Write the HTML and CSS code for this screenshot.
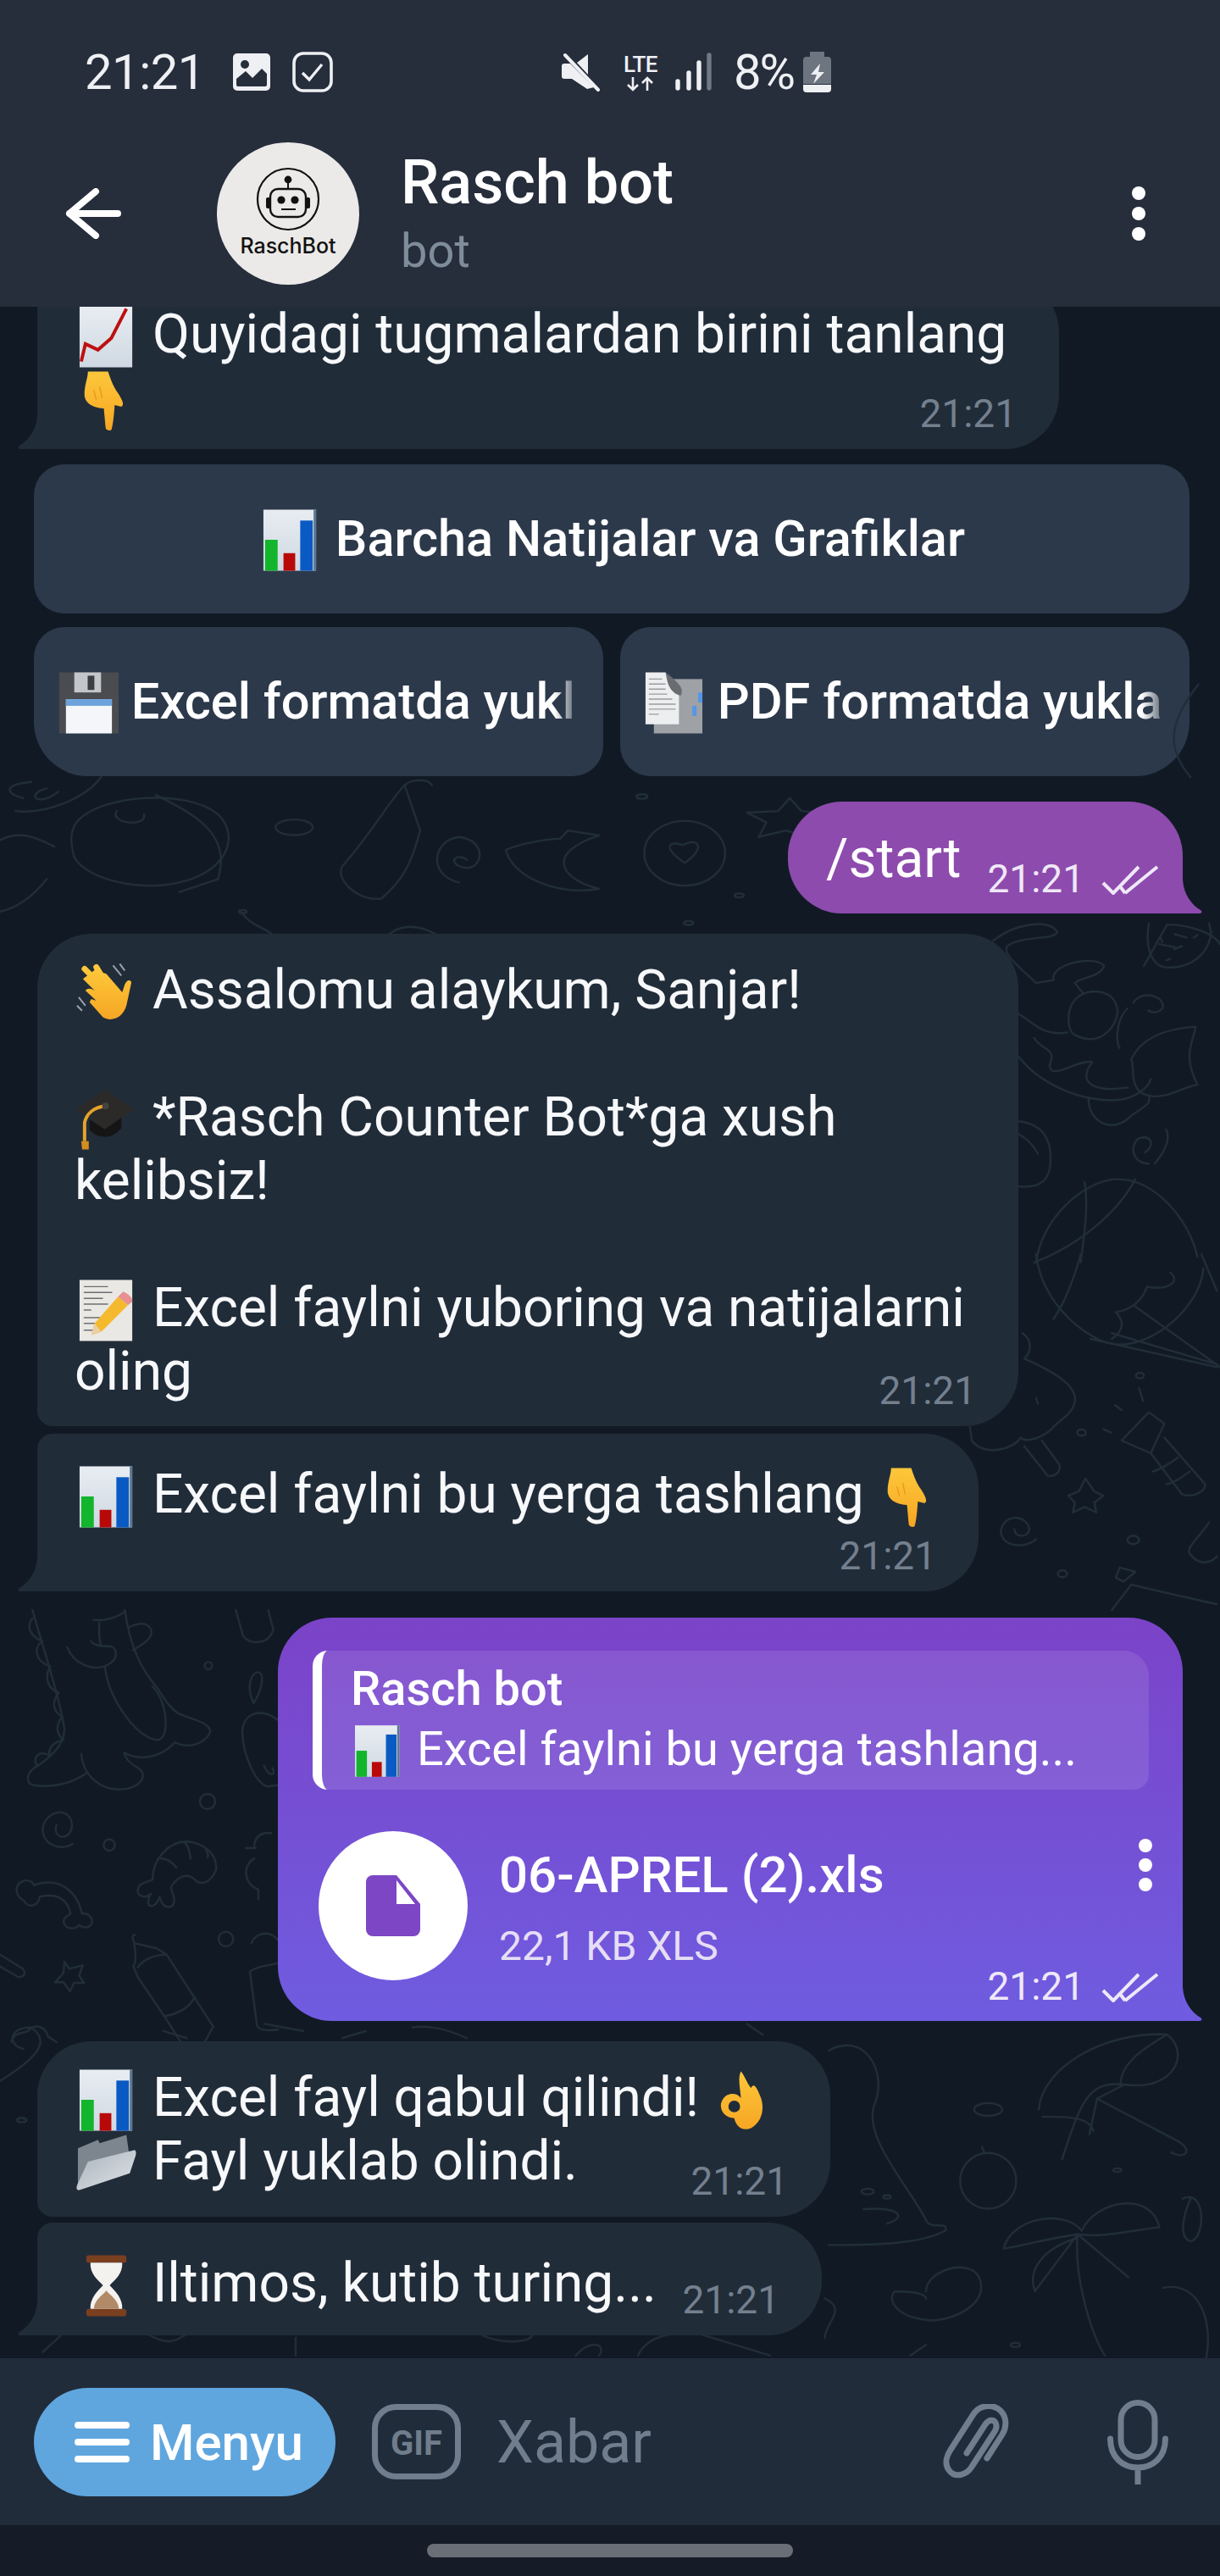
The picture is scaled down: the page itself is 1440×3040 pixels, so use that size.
FILE: index.html
```html
<!DOCTYPE html>
<html lang="uz">
<head>
<meta charset="utf-8">
<title>Rasch bot</title>
<link rel="stylesheet" href="styles.css">
</head>
<body>
<svg class="sprites" xmlns="http://www.w3.org/2000/svg">
  <defs>
    <linearGradient id="paper" x1="0" y1="0" x2="0" y2="1"><stop offset="0" stop-color="#e8edf2"/><stop offset="1" stop-color="#cfd8e2"/></linearGradient>
    <linearGradient id="gold" x1="0" y1="0" x2="0" y2="1"><stop offset="0" stop-color="#fdc73a"/><stop offset="1" stop-color="#f6a623"/></linearGradient>
    <linearGradient id="fold" x1="0" y1="0" x2="1" y2="1"><stop offset="0" stop-color="#a9b2bb"/><stop offset="1" stop-color="#dfe4e8"/></linearGradient>
  </defs>
  <symbol id="e-chart" viewBox="0 0 77 73">
    <rect x="6" width="63" height="73" fill="url(#paper)"/>
    <rect x="8" y="36" width="15" height="37" fill="#12b52c"/>
    <rect x="30" y="52" width="14" height="21" fill="#b90808"/>
    <rect x="50" y="13" width="15" height="60" fill="#0a5ac4"/>
    <rect x="66" width="3" height="73" fill="#5c7890"/>
  </symbol>
  <symbol id="e-up" viewBox="0 0 77 73">
    <rect x="6" width="63" height="73" fill="url(#paper)"/>
    <path d="M8 66 L13 45 L28 52 L44 38 L62 3" fill="none" stroke="#bd1010" stroke-width="4"/>
  </symbol>
  <symbol id="e-point" viewBox="0 0 77 73">
    <path d="M16 2 H40 C43 10 45 18 52 28 C57 36 60 42 56 44 L48 42 C47 55 46 66 44 72 C40 73 37 72 37 68 L35 46 C25 46 14 42 12 32 C11 20 16 10 16 2 Z" fill="url(#gold)"/>
    <path d="M30 20 L33 34 M23 24 L26 36" stroke="#e89a1e" stroke-width="1.4"/>
  </symbol>
  <symbol id="e-wave" viewBox="0 0 77 73">
    <path d="M12 8 L34 30 M26 6 L38 26" stroke="#fdc73a" stroke-width="7" stroke-linecap="round"/>
    <path d="M10 20 L24 34 C18 30 14 32 13 34 L26 46 L20 44 L18 48 L34 66 C45 72 58 66 62 52 L68 24 C66 20 62 22 60 27 L57 36 L38 14 L32 12 L40 26 L26 8 Z" fill="url(#gold)"/>
    <path d="M46 4 L56 16 M54 2 L60 10 M5 42 L13 52 M3 52 L9 58" stroke="#9aa2aa" stroke-width="2"/>
  </symbol>
  <symbol id="e-cap" viewBox="0 0 77 73">
    <path d="M36 0 L72 24 L36 48 L2 24 Z" fill="#2b2a29"/>
    <path d="M18 36 L18 48 C26 60 46 60 56 46 L56 34 L36 48 Z" fill="#151515"/>
    <path d="M36 20 C22 22 14 30 12 40 L12 62" stroke="#e5a32b" stroke-width="4" fill="none"/>
    <path d="M8 62 H17 L17 72 H9 Z" fill="#d48e20"/>
    <circle cx="37" cy="20" r="4" fill="#45433f"/>
  </symbol>
  <symbol id="e-memo" viewBox="0 0 77 73">
    <rect x="6" width="63" height="73" fill="#e9e8e4"/>
    <path d="M11 8 H40 M11 15 H45 M11 22 H34 M11 29 H40 M11 36 H20 M11 45 H32 M11 52 H26 M11 60 H22" stroke="#6d6f72" stroke-width="1.5"/>
    <path d="M52 20 L64 30 L32 62 L20 66 L24 52 Z" fill="#f5b92d"/>
    <path d="M24 52 L20 66 L32 62 Z" fill="#e9cfa4"/>
    <path d="M52 20 L58 14 C64 16 70 22 69 26 L64 30 Z" fill="#e78f91"/>
  </symbol>
  <symbol id="e-floppy" viewBox="0 0 77 73">
    <rect x="6" width="71" height="73" fill="#4a4c50"/>
    <rect x="24" y="0" width="32" height="24" fill="#c3c6ca"/>
    <rect x="40" y="4" width="8" height="17" fill="#3c3e42"/>
    <rect x="14" y="32" width="55" height="41" fill="#f4f6f9"/>
    <rect x="14" y="32" width="55" height="8" fill="#6ea2dc"/>
  </symbol>
  <symbol id="e-doc" viewBox="0 0 77 73">
    <rect x="16" y="8" width="58" height="65" fill="#9ea1a5"/>
    <rect x="69" y="24" width="5" height="12" fill="#5596e8"/>
    <rect x="62" y="40" width="5" height="12" fill="#5596e8"/>
    <path d="M6 0 H30 C34 8 42 14 46 16 V62 H6 Z" fill="#eceeef"/>
    <path d="M30 0 C32 12 34 24 48 28 C52 20 48 14 30 0 Z" fill="#6a6c70"/>
    <path d="M10 8 H26 M10 14 H30 M10 20 H30 M10 26 H32 M10 32 H38 M10 38 H42 M10 44 H42 M10 50 H22" stroke="#9a9ca0" stroke-width="1.4"/>
  </symbol>
  <symbol id="e-ok" viewBox="0 0 77 73">
    <path d="M34 2 C38 6 40 14 46 22 C50 14 54 24 58 34 C62 46 60 62 46 70 C36 74 28 68 26 58 C14 58 6 46 12 36 C18 26 30 28 34 34 C33 22 30 10 34 2 Z" fill="url(#gold)"/>
    <circle cx="26" cy="44" r="7" fill="#212c39"/>
  </symbol>
  <symbol id="e-folder" viewBox="0 0 77 73">
    <path d="M4 18 L28 8 L30 12 L62 2 L66 30 L12 64 L4 66 Z" fill="#7d868f"/>
    <path d="M16 34 L72 20 C74 22 74 24 72 30 L66 48 L6 68 C2 68 2 66 3 62 Z" fill="url(#fold)"/>
  </symbol>
  <symbol id="e-hour" viewBox="0 0 77 73">
    <rect x="14" y="0" width="48" height="9" rx="3" fill="#7a3f1f"/>
    <rect x="14" y="64" width="48" height="9" rx="3" fill="#7a3f1f"/>
    <path d="M19 9 H57 C58 22 48 30 42 36 C48 42 58 52 57 64 H19 C18 52 28 42 34 36 C28 30 18 22 19 9 Z" fill="#f4f2ef"/>
    <path d="M23 64 C24 52 34 48 38 42 C42 48 52 52 53 64 Z" fill="#b18a68"/>
  </symbol>
  <symbol id="i-check" viewBox="0 0 68 35">
    <path d="M2 21 L14 33 L44 2 M28 33 L66 2 M22 25 L28 33" fill="none" stroke="currentColor" stroke-width="4"/>
  </symbol>
</svg>

<div class="phone">
  <header class="appbar">
    <div class="status">
      <div class="status-left">
        <span class="status-time">21:21</span>
        <svg class="st-img" viewBox="0 0 44 44"><path d="M5 0 H39 A5 5 0 0 1 44 5 V39 A5 5 0 0 1 39 44 H5 A5 5 0 0 1 0 39 V5 A5 5 0 0 1 5 0 Z" fill="#eef0f3"/><circle cx="14" cy="13" r="5" fill="#262d3b"/><path d="M4 37 V30 L15 21 L23 29 L34 18 L40 24 V37 A2 2 0 0 1 38 39 H6 A2 2 0 0 1 4 37 Z" fill="#262d3b"/></svg>
        <svg class="st-check" viewBox="0 0 48 48"><rect x="2" y="2" width="44" height="44" rx="11" fill="none" stroke="#eef0f3" stroke-width="3.6"/><path d="M12 25 L20 33 L35 15" fill="none" stroke="#eef0f3" stroke-width="3.4"/></svg>
      </div>
      <div class="status-right">
        <svg class="st-mute" viewBox="0 0 46 46"><path d="M0 16 C0 14 1 13 3 13 H10 L38 41 L30 43 L12 31 H3 C1 31 0 30 0 28 Z M18 12 L31 2 V26 Z" fill="#eef0f3"/><path d="M4 3 L43 44" stroke="#eef0f3" stroke-width="4" stroke-linecap="round"/></svg>
        <div class="st-lte"><span class="lte-text">LTE</span><svg class="lte-arrows" viewBox="0 0 34 18"><path d="M8 1 V16 M2 10 L8 16 L14 10 M25 17 V2 M19 8 L25 2 L31 8" fill="none" stroke="#eef0f3" stroke-width="2.6"/></svg></div>
        <svg class="st-signal" viewBox="0 0 43 46"><g stroke-width="5.4" stroke-linecap="round"><path d="M3 34 V42 M16 24 V42 M28 12 V42" stroke="#eef0f3"/><path d="M40 3 V42" stroke="#717983"/></g></svg>
        <span class="status-pct">8%</span>
        <svg class="st-batt" viewBox="0 0 33 48"><path d="M8 0 H25 V6 H29 A4 4 0 0 1 33 10 V38 H0 V10 A4 4 0 0 1 4 6 H8 Z" fill="#6d7580"/><path d="M0 39 H33 V44 A4 4 0 0 1 29 48 H4 A4 4 0 0 1 0 44 Z" fill="#eef0f3"/><path d="M20 14 L9 27 H16 L12 38 L25 24 H18 Z" fill="#eef0f3"/></svg>
      </div>
    </div>
    <div class="toolbar">
      <svg class="back" viewBox="0 0 66 60"><path d="M36 4 L5 30 L36 56 M5 30 H62" fill="none" stroke="#fff" stroke-width="8" stroke-linecap="round" stroke-linejoin="round"/></svg>
      <svg class="avatar" viewBox="0 0 168 168">
        <circle cx="84" cy="84" r="84" fill="#ebeae8"/>
        <circle cx="84" cy="67" r="36" fill="none" stroke="#111" stroke-width="2.2"/>
        <circle cx="84" cy="44" r="4.4" fill="#111"/><path d="M84 46 V55" stroke="#111" stroke-width="2"/>
        <rect x="63" y="55" width="42" height="33" rx="9" fill="none" stroke="#111" stroke-width="2.4"/>
        <rect x="58" y="65" width="5" height="13" rx="2" fill="#111"/><rect x="105" y="65" width="5" height="13" rx="2" fill="#111"/>
        <circle cx="76" cy="68" r="4.6" fill="#111"/><circle cx="92" cy="68" r="4.6" fill="#111"/>
        <path d="M76 79 H93" stroke="#111" stroke-width="2"/>
        <text class="avatar-text" x="84" y="131" text-anchor="middle">RaschBot</text>
      </svg>
      <div class="chat-title">
        <div class="chat-name">Rasch bot</div>
        <div class="chat-sub">bot</div>
      </div>
      <svg class="more" viewBox="0 0 18 66"><circle cx="9" cy="9" r="8" fill="#fff"/><circle cx="9" cy="33" r="8" fill="#fff"/><circle cx="9" cy="57" r="8" fill="#fff"/></svg>
    </div>
  </header>

  <main class="chat">
    <svg class="doodles" viewBox="0 362 1440 2421" preserveAspectRatio="none" aria-hidden="true">
      <g fill="none" stroke="#212e3a" stroke-width="2.4" stroke-linecap="round" stroke-linejoin="round">
        <g transform="translate(0,1900) scale(.3333)">
          <path vector-effect="non-scaling-stroke" d="M115 0 C130 60 210 300 228 420 C230 480 170 530 120 560 C90 585 90 620 130 622 C200 628 260 610 310 575"/>
          <path vector-effect="non-scaling-stroke" d="M115 30 C90 60 110 95 150 110 C120 130 120 180 178 200 C155 240 170 280 208 292 C180 330 190 360 220 378 C195 410 200 440 225 460 C190 465 170 490 175 515 C140 495 115 520 130 550"/>
          <path vector-effect="non-scaling-stroke" d="M288 510 C295 590 360 640 430 635 C490 632 530 590 490 560 C465 545 445 530 440 505 C490 535 570 525 620 468 C670 495 730 470 745 430 C740 395 680 390 630 365 C600 345 585 320 560 280 C500 210 460 130 442 0"/>
          <path vector-effect="non-scaling-stroke" d="M372 200 C380 300 470 440 550 460 C585 465 590 420 585 370 C580 330 560 290 540 270"/>
          <path vector-effect="non-scaling-stroke" d="M238 132 C260 190 330 220 380 195 C420 175 420 130 385 128 C360 130 330 125 322 110 M352 45 C350 80 352 110 358 128 M330 35 C370 40 420 25 442 5 M455 62 C480 50 520 35 535 70 C545 100 500 125 470 142"/>
          <path vector-effect="non-scaling-stroke" d="M258 828 C220 850 165 840 152 790 C145 740 190 710 225 718 C260 730 265 780 235 800 C210 810 190 790 200 760"/>
          <circle vector-effect="non-scaling-stroke" cx="387" cy="832" r="20"/><circle vector-effect="non-scaling-stroke" cx="735" cy="678" r="27"/><circle vector-effect="non-scaling-stroke" cx="738" cy="197" r="13"/><circle vector-effect="non-scaling-stroke" cx="800" cy="1165" r="26"/>
          <path vector-effect="non-scaling-stroke" d="M120 975 C200 945 270 985 290 1075 C310 1070 330 1090 325 1110 C310 1135 285 1120 280 1115 C270 1130 235 1135 225 1105 C225 1085 245 1080 250 1075 C240 1030 210 1000 140 1015 C140 1045 100 1060 85 1030 C50 1010 50 970 85 958 C105 955 120 965 120 975"/>
          <path vector-effect="non-scaling-stroke" d="M540 955 C540 880 600 820 660 820 C730 825 770 870 765 920 C750 960 715 980 690 955 C660 925 620 950 605 985 C620 1020 625 1050 595 1052 C575 1050 570 1030 565 1015 C555 1050 530 1055 525 1040 C525 1020 530 1010 535 1005 C510 1025 480 1010 490 985 C495 965 520 965 540 955 M655 825 C670 840 672 860 675 880 M560 880 C590 875 610 895 625 912 M730 850 C735 860 740 870 735 875"/>
          <path vector-effect="non-scaling-stroke" d="M478 1150 C465 1150 470 1165 475 1180 C480 1210 482 1230 478 1250 L472 1260 L488 1300 L583 1440 L640 1530 M488 1265 C510 1235 550 1220 590 1220 L755 1475 L725 1530 M478 1180 L555 1198 L590 1220 M583 1438 C630 1430 670 1410 690 1370"/>
          <path vector-effect="non-scaling-stroke" d="M228 1245 L245 1270 L293 1258 L280 1295 L298 1320 L262 1320 L248 1350 L225 1318 L195 1318 L225 1285 Z"/>
          <path vector-effect="non-scaling-stroke" d="M0 1220 L80 1270 C95 1285 85 1300 65 1300 L0 1262 M40 1530 C50 1490 90 1500 100 1490 C120 1465 160 1470 170 1510 L200 1530 M835 0 L860 90 C880 125 950 125 968 70 L950 0"/>
          <path vector-effect="non-scaling-stroke" d="M898 330 C870 270 890 220 915 220 C940 225 925 290 898 330 M858 430 C860 370 920 340 985 390 M858 430 C860 520 910 620 950 625 L985 620 M935 550 C950 590 980 590 965 560 M900 840 C900 800 930 785 960 790 M870 843 H905 M900 880 C860 900 860 970 915 990 L915 1025 M890 1180 C900 1150 950 1125 985 1170 M885 1280 L910 1470 C915 1490 950 1490 985 1485 M885 1280 C910 1260 950 1260 985 1250"/>
        </g>
        <g transform="translate(720,1090) scale(.4592,.3333)">
          <path vector-effect="non-scaling-stroke" d="M985 60 C1040 0 1130 -20 1150 30 C1140 60 1060 40 1020 80 C1010 110 1050 150 1095 210 L1140 200 C1130 140 1250 110 1270 150 C1260 190 1210 190 1195 210 L1215 245 M1240 240 C1170 250 1170 360 1190 390 C1250 440 1300 380 1305 310 C1300 260 1280 240 1240 240 M1330 300 C1300 340 1300 420 1310 440 M1345 280 C1370 230 1430 260 1420 300 C1400 330 1370 300 1390 310 M1340 480 C1370 390 1450 370 1505 365 C1500 420 1470 460 1510 570 C1470 580 1430 620 1390 610 C1330 600 1350 510 1340 480 M1050 320 C1090 350 1110 400 1175 385 M1090 405 C1110 450 1150 440 1130 500 C1130 560 1200 480 1240 490 C1200 560 1240 600 1330 580 M1050 470 C1100 560 1200 630 1300 625 C1350 620 1385 580 1390 550 M1230 620 C1230 700 1290 750 1340 680 C1380 640 1390 640 1385 610 M1385 850 C1340 850 1335 780 1360 760 C1395 745 1400 790 1375 810 M1400 850 C1430 800 1440 760 1430 730 M1050 700 C1120 710 1140 780 1130 870 C1120 930 1080 935 1050 930 M1050 745 C1080 770 1090 790 1100 815"/>
          <path vector-effect="non-scaling-stroke" d="M1095 1200 C1110 1040 1220 910 1300 905 C1400 900 1490 1050 1510 1180 M1220 915 C1230 1000 1220 1090 1210 1200 M1350 905 C1310 1010 1220 1130 1090 1200"/>
          <path vector-effect="non-scaling-stroke" d="M1385 0 C1375 80 1390 150 1430 155 C1490 160 1540 110 1545 30 L1540 0 M1415 50 L1420 65 M1450 90 L1470 80 M1500 50 L1510 40 M1430 130 L1440 125"/>
        </g>
        <g transform="translate(720,1480) scale(.4592,.3333)">
          <path vector-effect="non-scaling-stroke" d="M1095 0 C1110 180 1230 310 1300 320 C1400 330 1520 180 1525 50 M1140 230 C1170 170 1190 100 1210 0 M1235 300 L1560 400 M1290 280 L1560 390 M1350 185 L1568 400 M1440 65 C1470 100 1430 130 1380 115 C1370 160 1340 200 1300 205 C1330 250 1310 280 1290 300 M1520 0 L1560 130"/>
          <path vector-effect="non-scaling-stroke" d="M1060 280 C1090 310 1080 350 1065 370 C1130 410 1200 460 1195 520 C1190 570 1150 590 1135 620 C1110 650 1070 670 1055 650 C1040 690 960 720 930 660 L925 610 M1065 680 L1125 785 C1145 790 1160 770 1155 745 L1110 660 M1095 510 L1100 530"/>
          <circle vector-effect="non-scaling-stroke" cx="1362" cy="430" r="10"/><circle vector-effect="non-scaling-stroke" cx="1212" cy="632" r="11"/><circle vector-effect="non-scaling-stroke" cx="1345" cy="1012" r="15"/><circle vector-effect="non-scaling-stroke" cx="1163" cy="1132" r="12"/>
          <path vector-effect="non-scaling-stroke" d="M1360 475 L1370 520 M1298 535 L1315 552 M1268 620 L1288 632 M1385 560 L1315 660 L1390 705 L1425 600 Z M1390 705 L1470 850 C1500 865 1530 840 1530 815 L1425 650 M1460 720 C1440 740 1420 760 1395 770 M1490 770 C1470 790 1450 810 1430 815"/>
          <path vector-effect="non-scaling-stroke" d="M1222 795 L1245 840 L1268 855 L1245 880 L1250 915 L1220 895 L1190 915 L1195 880 L1178 855 L1205 840 Z"/>
          <path vector-effect="non-scaling-stroke" d="M1095 1010 C1060 1050 1000 1030 1005 975 C1020 910 1075 930 1078 975 C1075 1005 1040 1005 1040 975"/>
          <path vector-effect="non-scaling-stroke" d="M1540 950 C1510 1010 1480 1040 1490 1060 C1510 1100 1540 1100 1560 1070 M1290 1260 L1340 1170 L1400 1190 L1560 1240 M1310 1110 L1350 1125 L1320 1160 L1300 1145 Z"/>
        </g>
        <g transform="translate(0,540) scale(.9184,.3827)">
          <path vector-effect="non-scaling-stroke" d="M100 1120 C130 1040 240 1020 280 1100 C310 1170 290 1280 230 1310 C180 1340 110 1300 95 1230 C90 1180 90 1150 100 1120 M150 1090 C140 1130 190 1140 185 1100 M200 1040 C240 1090 300 1150 280 1300 L230 1340"/>
          <circle vector-effect="non-scaling-stroke" cx="378" cy="1140" r="24"/>
          <path vector-effect="non-scaling-stroke" d="M520 1010 C500 1060 480 1150 440 1260 C430 1300 460 1370 490 1360 C520 1300 530 1240 540 1150 Z M520 1010 C530 990 550 990 555 1010"/>
          <path vector-effect="non-scaling-stroke" d="M590 1310 C550 1290 555 1180 590 1170 C630 1180 620 1290 590 1260 C575 1240 590 1220 600 1240"/>
          <path vector-effect="non-scaling-stroke" d="M650 1210 C660 1300 720 1350 770 1330 C720 1300 700 1220 770 1165 L730 1150 L720 1175 C690 1180 670 1190 650 1210"/>
          <ellipse vector-effect="non-scaling-stroke" cx="880" cy="1220" rx="52" ry="100"/>
          <path vector-effect="non-scaling-stroke" d="M880 1250 C850 1200 860 1180 878 1195 C895 1170 910 1200 880 1250"/>
          <circle vector-effect="non-scaling-stroke" cx="825" cy="1045" r="7"/>
          <path vector-effect="non-scaling-stroke" d="M1015 1050 L1030 1090 L1070 1100 L1040 1130 L1040 1170 L1010 1150 L975 1170 L985 1125 L960 1095 L1000 1090 Z"/>
          <path vector-effect="non-scaling-stroke" d="M60 1020 C30 1040 50 1080 75 1030 M0 1180 C30 1140 60 1190 70 1200 M60 1300 C40 1360 20 1390 0 1400 M310 1400 C320 1440 340 1450 350 1470 M560 1470 C530 1430 510 1450 500 1470"/>
          <circle vector-effect="non-scaling-stroke" cx="312" cy="1400" r="5"/><circle vector-effect="non-scaling-stroke" cx="950" cy="1350" r="6"/><circle vector-effect="non-scaling-stroke" cx="885" cy="1435" r="6"/>
          <path vector-effect="non-scaling-stroke" d="M1470 1568 L1500 1440 C1530 1440 1560 1468 1568 1500 M1490 1500 L1510 1510 M1510 1470 L1525 1480"/>
          <path vector-effect="non-scaling-stroke" d="M1540 700 C1500 820 1500 900 1530 985 M40 1000 C0 1010 10 1040 30 1050 M130 985 C110 1050 60 1100 20 1090"/>
        </g>
        <g transform="translate(0,2380) scale(.9184,.4209)">
          <path vector-effect="non-scaling-stroke" d="M1335 260 C1340 140 1420 40 1500 50 C1530 100 1510 210 1445 190 C1400 180 1390 230 1365 400 M1405 320 C1400 280 1370 280 1340 280 M1500 50 C1460 100 1440 140 1440 190 M1445 190 L1410 230 M1410 230 L1515 350 C1535 380 1520 400 1505 380 M1410 230 L1400 330"/>
          <path vector-effect="non-scaling-stroke" d="M1290 650 C1300 560 1370 540 1390 600 C1410 510 1480 490 1490 590 C1450 600 1420 620 1385 610 C1350 620 1320 640 1290 650 M1385 610 C1380 720 1400 880 1420 950 M1385 610 L1330 770 M1385 610 L1450 730 M1330 770 C1320 710 1340 650 1385 620"/>
          <ellipse vector-effect="non-scaling-stroke" cx="1270" cy="460" rx="36" ry="78"/><path vector-effect="non-scaling-stroke" d="M1265 380 L1262 365"/>
          <path vector-effect="non-scaling-stroke" d="M1065 95 C1110 40 1140 150 1125 240 C1105 330 1170 480 1190 570 C1195 600 1220 570 1215 600 C1180 640 1120 640 1065 640 M1110 540 C1150 530 1170 560 1140 580"/>
          <circle vector-effect="non-scaling-stroke" cx="1270" cy="260" r="18"/><circle vector-effect="non-scaling-stroke" cx="1115" cy="490" r="8"/><circle vector-effect="non-scaling-stroke" cx="1140" cy="505" r="5"/>
          <path vector-effect="non-scaling-stroke" d="M1190 770 C1190 710 1250 670 1260 740 C1270 820 1210 860 1190 850 C1150 840 1140 790 1150 770 C1180 770 1190 780 1190 790"/>
          <path vector-effect="non-scaling-stroke" d="M1520 510 C1550 480 1550 620 1530 630 C1515 620 1520 560 1530 510 M1495 760 C1540 740 1560 850 1550 960 M1060 790 C1090 820 1060 860 1060 900 M0 180 C60 100 60 60 40 30 C10 30 10 80 30 90"/>
          <circle vector-effect="non-scaling-stroke" cx="28" cy="290" r="6"/><circle vector-effect="non-scaling-stroke" cx="1436" cy="430" r="5"/><circle vector-effect="non-scaling-stroke" cx="1305" cy="920" r="6"/>
          <path vector-effect="non-scaling-stroke" d="M530 30 C560 20 590 50 600 60 M470 40 L440 60 M960 20 L980 50 M210 40 L240 60 M340 20 L390 40 M55 940 L80 890 M190 890 C220 930 230 900 240 890 M380 900 L380 950 M610 880 C640 930 700 910 680 880 M740 950 C760 900 780 920 770 950 M820 950 C830 900 860 880 900 890 L990 950 M1170 950 L1190 920"/>
        </g>
      </g>
    </svg>

    <div class="msg in last-in first-clip">
      <svg class="emoji"><use href="#e-up"/></svg> Quyidagi tugmalardan birini tanlang<br><svg class="emoji"><use href="#e-point"/></svg>
      <span class="time">21:21</span>
    </div>

    <div class="kb">
      <div class="kb-btn kb-wide"><span><svg class="emoji"><use href="#e-chart"/></svg> Barcha Natijalar va Grafiklar</span></div>
      <div class="kb-row">
        <div class="kb-btn kb-left"><span class="kb-label"><svg class="emoji"><use href="#e-floppy"/></svg> Excel formatda yukl</span></div>
        <div class="kb-btn kb-right"><span class="kb-label"><svg class="emoji"><use href="#e-doc"/></svg> PDF formatda yukla</span></div>
      </div>
    </div>

    <div class="msg out out-start last-out">
      /start
      <span class="time-out">21:21<svg class="ticks"><use href="#i-check"/></svg></span>
    </div>

    <div class="msg in m-welcome first-in">
      <svg class="emoji"><use href="#e-wave"/></svg> Assalomu alaykum, Sanjar!<br><br>
      <svg class="emoji"><use href="#e-cap"/></svg> *Rasch Counter Bot*ga xush<br>kelibsiz!<br><br>
      <svg class="emoji"><use href="#e-memo"/></svg> Excel faylni yuboring va natijalarni<br>oling
      <span class="time">21:21</span>
    </div>

    <div class="msg in m-drop last-in">
      <svg class="emoji"><use href="#e-chart"/></svg> Excel faylni bu yerga tashlang <svg class="emoji"><use href="#e-point"/></svg>
      <span class="time">21:21</span>
    </div>

    <div class="msg out out-file last-out">
      <div class="reply">
        <div class="reply-name">Rasch bot</div>
        <div class="reply-text"><svg class="emoji emoji-sm"><use href="#e-chart"/></svg> Excel faylni bu yerga tashlang...</div>
      </div>
      <div class="doc">
        <div class="doc-icon"><svg class="doc-glyph" viewBox="0 0 64 72"><path d="M8 0 H36 L64 34 V64 A8 8 0 0 1 56 72 H8 A8 8 0 0 1 0 64 V8 A8 8 0 0 1 8 0 Z" fill="#7c46c4"/><path d="M36 6 L58 34 H36 Z" fill="#fff"/></svg></div>
        <div class="doc-info">
          <div class="doc-name">06-APREL (2).xls</div>
          <div class="doc-size">22,1 KB XLS</div>
        </div>
        <svg class="doc-more" viewBox="0 0 16 62"><circle cx="8" cy="8" r="8" fill="#fff"/><circle cx="8" cy="31" r="8" fill="#fff"/><circle cx="8" cy="54" r="8" fill="#fff"/></svg>
      </div>
      <span class="time-out">21:21<svg class="ticks"><use href="#i-check"/></svg></span>
    </div>

    <div class="msg in m-recv first-in">
      <svg class="emoji"><use href="#e-chart"/></svg> Excel fayl qabul qilindi! <svg class="emoji"><use href="#e-ok"/></svg><br>
      <svg class="emoji"><use href="#e-folder"/></svg> Fayl yuklab olindi.
      <span class="time">21:21</span>
    </div>

    <div class="msg in m-wait last-in">
      <svg class="emoji"><use href="#e-hour"/></svg> Iltimos, kutib turing...
      <span class="time">21:21</span>
    </div>
  </main>

  <footer class="composer">
    <div class="menu-btn">
      <svg class="menu-icon" viewBox="0 0 65 48"><path d="M4 4 H61 M4 24 H61 M4 44 H61" stroke="#fff" stroke-width="8" stroke-linecap="round"/></svg>
      <span>Menyu</span>
    </div>
    <svg class="gif" viewBox="0 0 105 89"><rect x="3.5" y="3.5" width="98" height="82" rx="25" fill="none" stroke="#6f7d8c" stroke-width="7"/><text class="gif-text" x="52.5" y="60" text-anchor="middle">GIF</text></svg>
    <div class="placeholder">Xabar</div>
    <svg class="clip" viewBox="0 0 78 90"><path d="M28 58 L50 24 C54 18 60 18 62 22 C64 26 63 30 60 34 L34 74 C28 84 14 88 7 78 C1 70 5 60 9 54 L36 12 C44 0 60 0 68 8 C76 16 75 28 70 36 L52 64" fill="none" stroke="#6f7d8c" stroke-width="7" stroke-linecap="round" stroke-linejoin="round"/></svg>
    <svg class="mic" viewBox="0 0 72 100"><rect x="16" y="3.5" width="40" height="64" rx="20" fill="none" stroke="#6f7d8c" stroke-width="7"/><path d="M3.5 46 C3.5 68 18 80 36 80 C54 80 68.5 68 68.5 46 M36 80 V99" fill="none" stroke="#6f7d8c" stroke-width="7" stroke-linecap="round"/></svg>
  </footer>
  <div class="navbar"><div class="home-pill"></div></div>
</div>
</body>
</html>
```
FILE: styles.css
```css
* { box-sizing: border-box; }
html, body { margin: 0; padding: 0; }
body { width: 1440px; height: 3040px; background: #111a24; font-family: Roboto, "Noto Sans", sans-serif; color: #f7f8fa; overflow: hidden; }
.sprites { position: absolute; width: 0; height: 0; overflow: hidden; }
.phone { width: 1440px; height: 3040px; display: flex; flex-direction: column; }

.appbar { height: 362px; background: #262d3b; flex: none; }
.status { height: 142px; padding: 60px 0 0 100px; display: flex; color: #eef0f3; }
.status-left { width: 563px; height: 50px; display: flex; align-items: center; }
.status-time { font-size: 58px; line-height: 50px; letter-spacing: -.5px; width: 175px; }
.st-img { width: 44px; height: 44px; flex: none; }
.st-check { width: 48px; height: 48px; margin-left: 26px; flex: none; }
.status-right { height: 50px; display: flex; align-items: center; }
.st-mute { width: 46px; height: 46px; flex: none; }
.st-lte { width: 46px; margin-left: 24px; display: flex; flex-direction: column; align-items: center; }
.lte-text { font-size: 26px; line-height: 28px; font-weight: 500; letter-spacing: -.5px; }
.lte-arrows { width: 34px; height: 18px; }
.st-signal { width: 43px; height: 46px; margin-left: 18px; flex: none; }
.status-pct { font-size: 58px; line-height: 50px; margin-left: 26px; width: 82px; letter-spacing: -2px; white-space: nowrap; }
.st-batt { width: 33px; height: 48px; flex: none; }

.toolbar { height: 220px; display: flex; align-items: center; padding-left: 77px; }
.back { width: 66px; height: 60px; flex: none; }
.avatar { width: 168px; height: 168px; margin-left: 113px; flex: none; }
.avatar-text { font-family: Inter, Roboto, sans-serif; font-size: 25px; font-weight: 500; fill: #111; }
.chat-title { margin-left: 49px; padding-top: 4px; flex: 1; }
.chat-name { font-size: 72px; line-height: 76px; font-weight: 500; color: #fff; }
.chat-sub { font-size: 56px; line-height: 70px; color: #7f8c9a; margin-top: 7px; }
.more { width: 18px; height: 66px; margin-right: 87px; flex: none; }

.chat { position: relative; flex: 1; min-height: 0; overflow: hidden; background: #111a24; display: flex; flex-direction: column; justify-content: flex-end; padding-bottom: 27px; }
.chat > * { flex: none; }
.doodles { position: absolute; left: 0; top: 0; width: 1440px; height: 2421px; }

.msg { position: relative; font-size: 64px; line-height: 75px; white-space: nowrap; }
.in { align-self: flex-start; margin-left: 44px; background: #212c39; padding: 29px 0 28px 44px; border-radius: 64px 64px 64px 18px; }
.out { align-self: flex-end; margin-right: 44px; }
.first-in { border-radius: 64px 64px 64px 18px; }
.last-in { border-radius: 18px 64px 64px 0; }
.last-in::after, .last-out::after { content: ""; position: absolute; bottom: 0; width: 24px; height: 40px; }
.last-in::after { left: -23px; background: #212c39; clip-path: path("M24 0 L24 40 L3 40 C0 40 0 37 2 36 C12 30 22 18 23 0 Z"); }
.last-out::after { right: -23px; clip-path: path("M0 0 L0 40 L21 40 C24 40 24 37 22 36 C12 30 2 18 1 0 Z"); }
.first-clip { width: 1206px; padding-bottom: 23px; margin-top: 0; }
.m-welcome { width: 1158px; margin-top: 24px; padding-bottom: 27px; }
.m-drop { width: 1111px; margin-top: 9px; padding: 34px 0 77px 44px; }
.m-recv { width: 936px; margin-top: 24px; border-radius: 64px 64px 64px 18px; }
.m-wait { width: 926px; margin-top: 7px; padding: 34px 0 24px 44px; }

.emoji { display: inline-block; width: 76px; height: 73px; vertical-align: -15px; margin-bottom: -3px; }
.emoji-sm { width: 64px; height: 65px; vertical-align: -13px; }

.time { position: absolute; right: 50px; bottom: 20px; font-size: 46px; line-height: 44px; color: #74808e; }
.time-out { position: absolute; right: 28px; bottom: 19px; display: flex; align-items: flex-end; gap: 20px; font-size: 46px; line-height: 44px; color: #efe8f8; }
.ticks { width: 68px; height: 35px; color: #efe8f8; margin-bottom: 3px; }

.kb { margin: 18px 36px 0 40px; display: flex; flex-direction: column; gap: 16px; }
.kb-btn { height: 176px; background: #2c394b; border-radius: 36px; display: flex; align-items: center; justify-content: center; font-size: 59.5px; line-height: 75px; font-weight: 500; color: #fff; white-space: nowrap; }
.kb-row { display: flex; gap: 20px; }
.kb-left, .kb-right { flex: 1 1 0; min-width: 0; justify-content: flex-start; padding: 0 0 0 24px; }
.kb-left { border-radius: 36px 36px 36px 64px; }
.kb-right { border-radius: 36px 36px 64px 36px; }
.kb-label { -webkit-mask-image: linear-gradient(to right, #000 96%, rgba(0,0,0,.25) 100%); mask-image: linear-gradient(to right, #000 96%, rgba(0,0,0,.25) 100%); }

.out-start { width: 466px; height: 132px; margin-top: 30px; padding: 30px 0 0 45px; background: #8d4bad; border-radius: 64px 64px 0 64px; color: #fff; }
.out-start::after { background: #8d4bad; }
.out-file { width: 1068px; height: 476px; margin-top: 31px; padding: 39px 40px 0 41px; background: linear-gradient(#7b43c8, #6f5ce0); border-radius: 64px 64px 0 64px; }
.out-file::after { background: #6f5ce0; }

.reply { height: 164px; padding: 13px 0 0 34px; background: rgba(255,255,255,.1); border-left: 11px solid #fff; border-radius: 18px 30px 18px 18px; color: #fff; }
.reply-name { font-size: 56px; line-height: 64px; font-weight: 500; }
.reply-text { font-size: 56px; line-height: 70px; margin-top: 4px; }
.doc { display: flex; margin: 49px 0 0 7px; }
.doc-icon { width: 176px; height: 176px; border-radius: 50%; background: #fff; display: flex; align-items: center; justify-content: center; flex: none; }
.doc-glyph { width: 64px; height: 72px; }
.doc-info { margin-left: 37px; padding-top: 19px; flex: 1; }
.doc-name { font-size: 60px; line-height: 66px; font-weight: 500; color: #fff; }
.doc-size { font-size: 48px; line-height: 56px; margin-top: 23px; color: #e6def5; }
.doc-more { width: 16px; height: 62px; margin: 9px -4px 0 0; flex: none; }

.composer { height: 197px; flex: none; background: #212c3a; display: flex; align-items: center; padding-left: 40px; }
.menu-btn { width: 356px; height: 128px; margin-top: 1px; border-radius: 64px; background: #5fa6df; display: flex; align-items: center; padding-left: 48px; gap: 24px; color: #fff; font-size: 60px; font-weight: 500; flex: none; }
.menu-icon { width: 65px; height: 48px; flex: none; }
.gif { width: 105px; height: 89px; margin-left: 43px; flex: none; }
.gif-text { font-family: Roboto, sans-serif; font-size: 40px; font-weight: 700; fill: #6f7d8c; }
.placeholder { margin-left: 42px; font-size: 70px; line-height: 80px; color: #6f7d8c; flex: 1; }
.clip { width: 78px; height: 90px; flex: none; }
.mic { width: 72px; height: 100px; margin: 0 61px 0 116px; flex: none; }

.navbar { height: 60px; flex: none; background: #151c27; display: flex; justify-content: center; padding-top: 22px; }
.home-pill { width: 432px; height: 16px; border-radius: 8px; background: #6a6f77; }
```
